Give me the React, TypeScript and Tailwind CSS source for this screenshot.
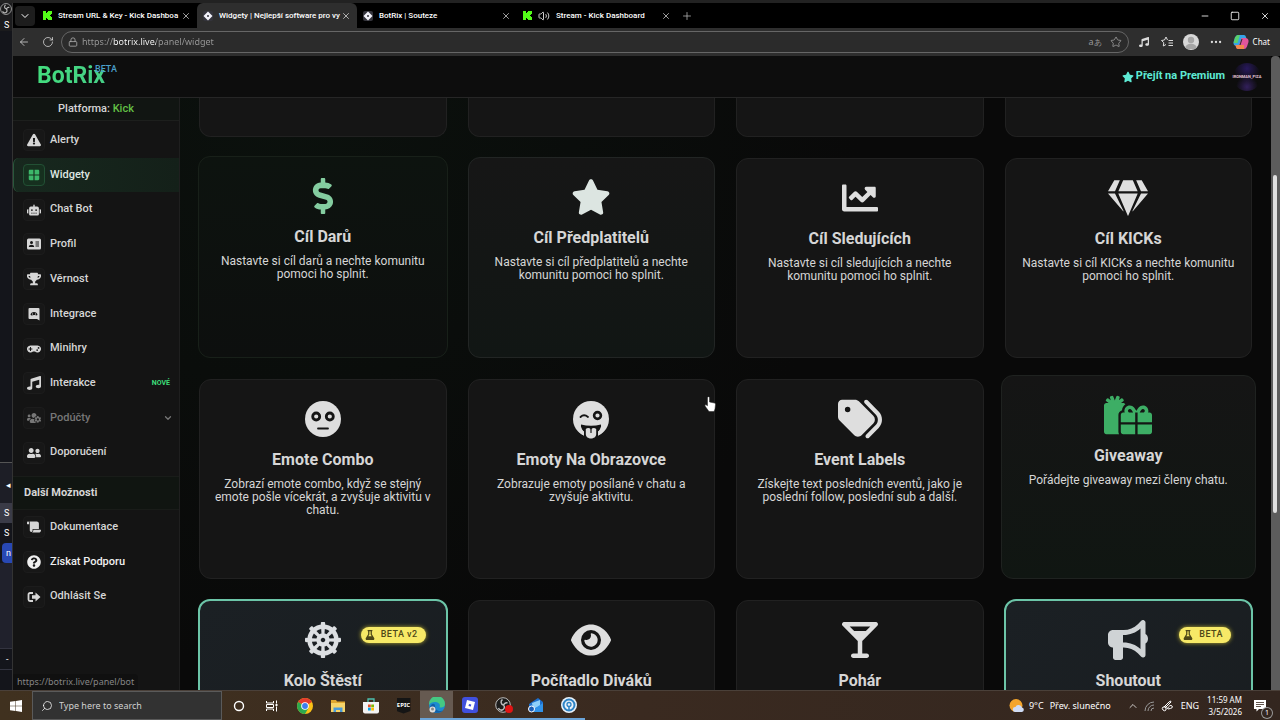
import type { ReactNode } from "react";
import type { IconType } from "react-icons";
import {
  FaChartLine,
  FaDharmachakra,
  FaDollarSign,
  FaExclamationTriangle,
  FaFlask,
  FaGamepad,
  FaGem,
  FaGifts,
  FaMusic,
  FaQuestionCircle,
  FaRobot,
  FaScroll,
  FaTrophy,
  FaUserFriends,
  FaUsersCog,
} from "react-icons/fa";
import { FaBullhorn, FaEye, FaMartiniGlass, FaStar, FaTags } from "react-icons/fa6";
import { MdWindow } from "react-icons/md";
import {
  ArrowLeft,
  ChevronDown,
  ChevronUp,
  Ellipsis,
  Lock,
  Minus,
  Plus,
  RotateCw,
  Search,
  Square,
  Star,
  Volume2,
  X,
} from "lucide-react";

type NavItem = {
  label: string;
  icon: IconType | (() => ReactNode);
  active?: boolean;
  muted?: boolean;
  bright?: boolean;
  tag?: string;
};

const mainNav: NavItem[] = [
  { label: "Alerty", icon: FaExclamationTriangle },
  { label: "Widgety", icon: MdWindow, active: true },
  { label: "Chat Bot", icon: FaRobot },
  { label: "Profil", icon: ProfileIcon },
  { label: "Věrnost", icon: FaTrophy },
  { label: "Integrace", icon: IntegrationIcon },
  { label: "Minihry", icon: FaGamepad },
  { label: "Interakce", icon: FaMusic, tag: "NOVÉ" },
  { label: "Podúčty", icon: FaUsersCog, muted: true },
  { label: "Doporučení", icon: FaUserFriends },
];

const moreNav: NavItem[] = [
  { label: "Dokumentace", icon: FaScroll },
  { label: "Získat Podporu", icon: FaQuestionCircle, bright: true },
  { label: "Odhlásit Se", icon: LogoutIcon },
];

const plain = "border border-[#212121] bg-[#151515]";
const featured = "-m-px border-2 border-[#6cc5a8] bg-linear-to-br from-[#1b2024] to-[#191d20]";

const widgets = [
  {
    title: "Cíl Darů",
    text: "Nastavte si cíl darů a nechte komunitu pomoci ho splnit.",
    icon: <FaDollarSign className="size-9 text-[#84cda0]" />,
    box: "-mx-px -mt-0.5 border border-[#182019] bg-linear-to-b from-[#0d130f] to-[#0d0f0e]",
  },
  {
    title: "Cíl Předplatitelů",
    text: "Nastavte si cíl předplatitelů a nechte komunitu pomoci ho splnit.",
    icon: <FaStar className="size-10 text-[#dce5e1]" />,
    box: "-mt-px border border-[#222524] bg-linear-to-b from-[#161616] to-[#111614]",
  },
  {
    title: "Cíl Sledujících",
    text: "Nastavte si cíl sledujících a nechte komunitu pomoci ho splnit.",
    icon: <FaChartLine className="size-9 text-[#dedede]" />,
    box: plain,
  },
  {
    title: "Cíl KICKs",
    text: "Nastavte si cíl KICKs a nechte komunitu pomoci ho splnit.",
    icon: <FaGem className="size-10 text-[#dedede]" />,
    box: plain,
  },
  {
    title: "Emote Combo",
    text: "Zobrazí emote combo, když se stejný emote pošle vícekrát, a zvyšuje aktivitu v chatu.",
    icon: <StareFace />,
    box: plain,
  },
  {
    title: "Emoty Na Obrazovce",
    text: "Zobrazuje emoty posílané v chatu a zvyšuje aktivitu.",
    icon: <TongueFace />,
    box: plain,
  },
  {
    title: "Event Labels",
    text: "Získejte text posledních eventů, jako je poslední follow, poslední sub a další.",
    icon: <FaTags className="h-11 w-12 text-[#dedede]" />,
    box: plain,
  },
  {
    title: "Giveaway",
    text: "Pořádejte giveaway mezi členy chatu.",
    icon: <FaGifts className="h-10 w-12 text-[#3dae65]" />,
    box: "-mx-1 -mt-1 border border-[#1f2220] bg-linear-to-b from-[#151515] to-[#101612]",
  },
  {
    title: "Kolo Štěstí",
    icon: <FaDharmachakra className="size-9 text-[#dcdfe2]" />,
    box: featured,
    badge: "BETA v2",
  },
  { title: "Počítadlo Diváků", icon: <FaEye className="size-10 text-[#dedede]" />, box: plain },
  { title: "Pohár", icon: <FaMartiniGlass className="size-9 text-[#dedede]" />, box: plain },
  {
    title: "Shoutout",
    icon: <FaBullhorn className="size-10 text-[#cfd3d5]" />,
    box: featured,
    badge: "BETA",
  },
];

export default function App() {
  return (
    <div className="flex h-screen flex-col overflow-hidden bg-black font-['Roboto',sans-serif] text-[#d6d6d6]">
      <div className="h-[3px] shrink-0 bg-[#222]" />
      <div className="flex min-h-0 flex-1">
        <BackgroundWindow />
        <div className="relative flex min-w-0 flex-1 flex-col border-l border-[#333]">
          <TabStrip />
          <Toolbar />
          <div className="flex min-h-0 flex-1">
            <div className="flex min-w-0 flex-1 flex-col bg-[#0a0a0a]">
              <PageHeader />
              <div className="flex min-h-0 flex-1">
                <Sidebar />
                <WidgetGrid />
              </div>
            </div>
            <div className="flex w-[9px] shrink-0 flex-col rounded-t bg-[#5c5c5c] pt-[119px] pr-[3px] pl-0.5">
              <div className="h-[338px] rounded-full bg-[#e0e0e0]" />
            </div>
          </div>
          <div className="absolute bottom-0 left-0 rounded-tr bg-[#101010] px-1 font-['Noto_Sans',sans-serif] text-[9px] leading-4 text-[#858585]">
            https://botrix.live/panel/bot
          </div>
        </div>
      </div>
      <Taskbar />
      <HandCursor />
    </div>
  );
}

function BackgroundWindow() {
  return (
    <div className="flex w-3 shrink-0 flex-col overflow-hidden bg-[#14151b] text-[9px] leading-3 text-white">
      <div className="flex h-7 shrink-0 flex-col justify-between bg-[#1b1b1d]">
        <ObsIcon className="size-3" />
        <span className="pl-1">S</span>
      </div>
      <div className="mt-[431px] border-t border-[#555] bg-[#1d1e26] py-4 pl-1.5">◂</div>
      <div className="-mt-1 bg-[#3a3b47] py-1 pl-1">S</div>
      <div className="py-1 pl-1">S</div>
      <div className="ml-0.5 rounded-l bg-[#2848b4] py-1 pl-1">n</div>
      <div className="flex-1 bg-[#20212c]" />
      <div className="mb-5 border-y border-[#333440] py-1 pl-1.5">-</div>
    </div>
  );
}

function TabStrip() {
  return (
    <div className="flex h-[25px] shrink-0 items-center bg-black text-[8px] font-medium text-white">
      <button className="mx-0.5 flex h-5 w-5 items-center justify-center rounded bg-[#1d1d1d]" aria-label="Tab actions">
        <ChevronDown className="size-3" />
      </button>
      <Tab title="Stream URL & Key - Kick Dashboa" icon={<KickIcon />} />
      <Tab title="Widgety | Nejlepší software pro vy" icon={<BotrixIcon />} active />
      <Tab title="BotRix | Souteze" icon={<BotrixIcon />} />
      <Tab title="Stream - Kick Dashboard" icon={<KickIcon />} sound />
      <button className="p-1 text-[#bbb]" aria-label="New tab">
        <Plus className="size-3" strokeWidth={1.5} />
      </button>
      <div className="ml-auto flex items-center gap-5 pr-2.5">
        <button aria-label="Minimize">
          <Minus className="size-2.5" />
        </button>
        <button aria-label="Maximize">
          <Square className="size-2.5" />
        </button>
        <button aria-label="Close">
          <X className="size-2.5" />
        </button>
      </div>
    </div>
  );
}

function Tab({ title, icon, active, sound }: { title: string; icon: ReactNode; active?: boolean; sound?: boolean }) {
  return (
    <div
      className={`flex h-full w-40 items-center gap-1.5 px-1.5 ${
        active ? "rounded-t-md bg-[#2e2e2e]" : "bg-black"
      }`}
    >
      {icon}
      {sound && <Volume2 className="size-3 shrink-0 text-[#ccc]" />}
      <span className="min-w-0 flex-1 whitespace-nowrap">{title}</span>
      <button aria-label="Close tab">
        <X className="size-2.5" strokeWidth={1.5} />
      </button>
    </div>
  );
}

function Toolbar() {
  return (
    <div className="flex h-7 shrink-0 items-center bg-[#2e2e2e] font-['Noto_Sans',sans-serif] text-[#dcdcdc]">
      <button className="ml-1 p-px" aria-label="Back">
        <ArrowLeft className="size-3" strokeWidth={1.5} />
      </button>
      <button className="ml-2.5 p-px" aria-label="Reload">
        <RotateCw className="size-3" strokeWidth={1.5} />
      </button>
      <div className="ml-1.5 flex h-[22px] flex-1 items-center gap-1 rounded-full border border-[#666] bg-[#2b2b2b] px-1.5">
        <Lock className="size-2.5 text-[#aaa]" />
        {/* host part is brighter than the rest of the address */}
        <input
          aria-label="Address"
          defaultValue="https://botrix.live/panel/widget"
          className="flex-1 bg-[linear-gradient(to_right,#9a9a9a_31px,#fff_31px,#fff_74px,#9a9a9a_74px)] bg-clip-text text-[9px] text-transparent outline-none"
        />
        <span className="text-[9px] text-[#999]">a</span>
        <span className="-ml-1 pr-1 text-[8px] text-[#999]">あ</span>
        <Star className="size-3 text-[#aaa]" strokeWidth={1.5} />
      </div>
      <div className="flex items-center gap-2.5 pr-2.5 pl-2.5">
        <FaMusic className="mr-0.5 size-2.5" />
        <FavoritesIcon />
        <span className="flex size-4 items-end justify-center overflow-hidden rounded-full bg-[#d8d8d8]">
          <svg viewBox="0 0 16 16" className="size-4 fill-[#a5a5a5]" aria-hidden="true">
            <circle cx="8" cy="6" r="3.2" />
            <path d="M2 15c0-7 12-7 12 0z" />
          </svg>
        </span>
        <Ellipsis className="size-3.5" />
        <button className="flex items-center gap-1 text-[8px] text-white">
          <CopilotIcon />
          Chat
        </button>
      </div>
    </div>
  );
}

function PageHeader() {
  return (
    <header className="flex h-[42px] shrink-0 items-center justify-between border-b border-[#262626] bg-[#0d0d0d] pr-2.5 pl-6">
      <a href="/" className="flex items-center">
        <span className="bg-linear-to-r from-[#43dd7e] to-[#46cf86] bg-clip-text text-[23px] font-bold text-transparent">
          BotRix
        </span>
        <span className="-ml-2.5 pb-4 text-[9px] leading-3 font-medium text-[#4a9fca]">BETA</span>
      </a>
      <div className="flex items-center gap-2">
        <a href="/premium" className="flex items-center gap-0.5 text-[11px] font-bold text-[#5eead4]">
          <FaStar className="size-3" />
          Přejít na Premium
        </a>
        <div className="flex size-7 items-center justify-center rounded-full bg-[radial-gradient(circle_at_50%_20%,#28195c,transparent_50%),radial-gradient(circle_at_50%_85%,#33205c,transparent_40%)] text-[4px] font-bold text-[#e5c6d8]">
          IRONMAN_PIZA
        </div>
      </div>
    </header>
  );
}

function Sidebar() {
  return (
    <aside className="w-[167px] shrink-0 border-r border-[#1f1f1f] bg-[#141414] text-[11px] font-medium">
      <p className="h-[23px] border-b border-[#1d1f1d] bg-[#111512] text-center leading-[22px]">
        Platforma: <span className="text-[#62bf45]">Kick</span>
      </p>
      <nav>
        <ul className="mt-0.5 grid h-[347px] auto-rows-fr">
          {mainNav.map((item) => (
            <NavRow key={item.label} item={item} />
          ))}
        </ul>
        <h2 className="mt-1.5 border-y border-[#191c19] bg-[#101511] pl-[11px] leading-8 font-bold">Další Možnosti</h2>
        <ul className="grid h-[104px] auto-rows-fr">
          {moreNav.map((item) => (
            <NavRow key={item.label} item={item} />
          ))}
        </ul>
      </nav>
    </aside>
  );
}

function NavRow({ item }: { item: NavItem }) {
  const Icon = item.icon;
  return (
    <li>
      <a
        href="#"
        className={`flex h-full items-center gap-[5px] border-l pr-1.5 pl-[9px] ${
          item.active
            ? "rounded-l-md border-[#29583c] bg-linear-to-r from-[#17281e] to-[#142019] text-[#dfe6e1]"
            : "border-transparent"
        } ${item.muted ? "text-[#777]" : ""} ${item.bright ? "text-[#f0f0f0]" : ""}`}
      >
        <span
          className={`flex size-[22px] items-center justify-center rounded border text-[14px] ${
            item.active ? "border-[#225034] bg-[#16301f] text-[#3db76a]" : "border-[#1c1c1c] bg-[#171717]"
          }`}
        >
          <Icon />
        </span>
        {item.label}
        {item.tag && <span className="ml-auto pr-[3px] text-[7px] font-bold text-[#3ddc78]">{item.tag}</span>}
        {item.muted && <ChevronDown className="ml-auto size-2.5" strokeWidth={3} />}
      </a>
    </li>
  );
}

function WidgetGrid() {
  return (
    <main className="min-w-0 flex-1 overflow-hidden bg-[radial-gradient(circle_at_10%_0%,#0b110d,#090909_50%)] px-[19px]">
      <div className="grid grid-cols-4 grid-rows-[39px_200px_200px_200px] gap-[21px]">
        {[0, 1, 2, 3].map((n) => (
          <div key={n} className="rounded-b-xl border border-t-0 border-[#212121] bg-[#151515]" />
        ))}
        {widgets.map((widget) => (
          <a
            key={widget.title}
            href="#"
            className={`relative flex flex-col items-center rounded-xl px-3 pt-[19px] text-center ${widget.box}`}
          >
            <span className="flex h-10 items-center">{widget.icon}</span>
            <h3 className="mt-[9px] text-[16px] leading-6 font-bold">{widget.title}</h3>
            {widget.text && <p className="mt-1.5 text-[12px] leading-[13px]">{widget.text}</p>}
            {widget.badge && (
              <span className="absolute top-[26px] right-5 flex h-4 items-center gap-1.5 rounded-full bg-[#f7e967] pr-2 pl-1 text-[9px] font-medium tracking-wider text-[#4d4718] shadow-[0_0_4px_#b9ad32]">
                <FaFlask className="size-2.5" />
                {widget.badge}
              </span>
            )}
          </a>
        ))}
      </div>
    </main>
  );
}

function Taskbar() {
  const open = "border-b-2 border-[#6ba4d8]";
  return (
    <footer className="flex h-[30px] shrink-0 items-stretch border-t border-[#4a4039] bg-linear-to-r from-[#40311f] via-[#3a2a20] to-[#33261f] font-['Noto_Sans',sans-serif] text-white">
      <button className="flex w-8 items-center justify-center" aria-label="Start">
        <svg viewBox="0 0 12 12" className="size-3 fill-white" aria-hidden="true">
          <path d="M0 1.7 5.5 1v4.7H0zM6 .9 12 0v5.7H6zM0 6.2h5.5V11L0 10.2zM6 6.2h6V12l-6-.9z" />
        </svg>
      </button>
      <label className="flex w-[190px] items-center gap-1.5 border border-[#5a5a5a] bg-[#323232] px-2">
        <Search className="size-3 -scale-x-100" strokeWidth={1.5} />
        <input
          aria-label="Search"
          placeholder="Type here to search"
          className="min-w-0 flex-1 bg-transparent text-[9px] outline-none placeholder:text-[#d0d0d0]"
        />
      </label>
      <TaskButton label="Cortana">
        <svg viewBox="0 0 14 14" className="size-3.5" aria-hidden="true">
          <circle cx="7" cy="7" r="4.5" fill="none" stroke="white" strokeWidth="1.4" />
        </svg>
      </TaskButton>
      <TaskButton label="Task view">
        <svg viewBox="0 0 14 14" className="size-3.5" fill="none" stroke="white" aria-hidden="true">
          <path d="M1.5 2v2h7V2M1.5 12v-2h7v2M1.5 5.500h7v3h-7zM11.500 1.500v3M11.500 7.500v5" />
          <path d="M10.500 5h2v2h-2z" fill="white" stroke="none" />
        </svg>
      </TaskButton>
      <TaskButton label="Chrome">
        <svg viewBox="0 0 16 16" className="size-4" aria-hidden="true">
          <circle cx="8" cy="8" r="8" fill="#fbc116" />
          <path d="M8 8 1.100 4A8 8 0 0 1 14.900 4z" fill="#e33b2e" />
          <path d="M8 8 1.100 4A8 8 0 0 0 8 16l3.500-6z" fill="#2da94f" />
          <circle cx="8" cy="8" r="3.800" fill="white" />
          <circle cx="8" cy="8" r="2.900" fill="#3b7ded" />
        </svg>
      </TaskButton>
      <TaskButton label="File Explorer">
        <svg viewBox="0 0 16 16" className="size-4" aria-hidden="true">
          <path d="M1 2h5l1 1.500h8V6H1z" fill="#e0a830" />
          <path d="M1 5h14v9H1z" fill="#f6d469" />
          <path d="M3.500 14V9.500h9V14h-2.500v-2H6v2z" fill="#4a9bd8" />
        </svg>
      </TaskButton>
      <TaskButton label="Store">
        <svg viewBox="0 0 16 16" className="size-4" aria-hidden="true">
          <path d="M5 4V1h6v3" fill="none" stroke="#4cc0b0" strokeWidth="1.300" />
          <path d="M0 4h16v9.500a2 2 0 0 1-2 2H2a2 2 0 0 1-2-2z" fill="#f3f3f3" />
          <path d="M5 6.500h2.800v2.800H5z" fill="#e8502a" />
          <path d="M8.200 6.500H11v2.800H8.200z" fill="#7fba00" />
          <path d="M5 9.700h2.800v2.800H5z" fill="#00a4ef" />
          <path d="M8.200 9.700H11v2.800H8.200z" fill="#ffb900" />
        </svg>
      </TaskButton>
      <TaskButton label="Epic Games">
        <span className="flex h-4 w-3.5 items-center justify-center bg-[#151515] text-[6px] font-bold [clip-path:polygon(0_0,100%_0,100%_85%,50%_100%,0_85%)]">
          EPIC
        </span>
      </TaskButton>
      <TaskButton label="Edge" className="border-b-2 border-[#6ba4d8] bg-[#665a51]">
        <svg viewBox="0 0 16 16" className="size-4" aria-hidden="true">
          <circle cx="8" cy="8" r="8" fill="#1b8bd0" />
          <path d="M0 7a8 8 0 0 1 16 0c0 3-3 4-5.500 3.300C12 7 9 5 6 5S1 6 0 8z" fill="#45c983" />
          <path d="M6 9c0 4 4 6 8 4.500A8 8 0 0 1 1 11C1 7 6 5 6 9z" fill="#115fa8" />
          <circle cx="3.500" cy="12.500" r="3" fill="#ddd" />
          <circle cx="3.500" cy="12" r="1.500" fill="#888" />
        </svg>
      </TaskButton>
      <TaskButton label="Roblox" className={open}>
        <svg viewBox="0 0 16 16" className="size-4" aria-hidden="true">
          <rect width="16" height="16" rx="3" fill="#4050dd" />
          <path d="m5 3 8 2-2 8-8-2zm2 4-.5 2 2.300.600.500-2z" fill="white" fillRule="evenodd" />
        </svg>
      </TaskButton>
      <TaskButton label="OBS" className={open}>
        <span className="relative">
          <ObsIcon className="size-4" />
          <span className="absolute -right-0.5 bottom-0 size-2 rounded-full bg-[#e11414]" />
        </span>
      </TaskButton>
      <TaskButton label="Mail" className={open}>
        <svg viewBox="0 0 16 16" className="size-4" aria-hidden="true">
          <path d="m1 7 9-6 5 4v9H1z" fill="#1d6fcc" />
          <path d="m4 6 8-3v6l-7 3z" fill="#8fd0fa" />
          <path d="m6 12 9-6v9H3z" fill="#3093ea" />
          <circle cx="3.500" cy="12" r="3" fill="#1b5fb8" stroke="white" />
        </svg>
      </TaskButton>
      <TaskButton label="Signal" className={open}>
        <svg viewBox="0 0 16 16" className="size-4" fill="none" aria-hidden="true">
          <circle cx="8" cy="8" r="8" fill="#e9f2fa" />
          <circle cx="8" cy="8" r="5.500" stroke="#2d83c5" strokeWidth="2" />
          <circle cx="8" cy="7.500" r="2" stroke="#2d83c5" strokeWidth="1.300" />
          <path d="M8 9v4" stroke="#2d83c5" strokeWidth="1.500" />
        </svg>
      </TaskButton>

      <div className="ml-auto flex items-center pr-3.5 text-[9px]">
        <svg viewBox="0 0 16 16" className="size-4" aria-hidden="true">
          <circle cx="7" cy="7.500" r="6.500" fill="#f4a52c" />
          <path d="M6 14a2.500 2.500 0 0 1 .500-5 3.500 3.500 0 0 1 6.500.500A2.300 2.300 0 0 1 13 14z" fill="#cfdcf5" />
        </svg>
        <span className="ml-1">9°C</span>
        <span className="ml-1.5">Přev. slunečno</span>
        <ChevronUp className="ml-4 size-3" strokeWidth={1.5} />
        <svg viewBox="0 0 12 12" className="ml-1 size-3" fill="none" stroke="#999" aria-hidden="true">
          <path d="M2 11A9 9 0 0 1 11 2M5 11a6 6 0 0 1 6-6M8 11a3 3 0 0 1 3-3" />
        </svg>
        <svg viewBox="0 0 12 12" className="ml-1.5 size-3" fill="none" stroke="white" aria-hidden="true">
          <path d="M3 7 8 2q2-2 2 0L4 8M2 7h3v3a2 2 0 0 1-3-3M6 9q3-5 5-3t-4 3" />
        </svg>
        <span className="ml-2">ENG</span>
        <time className="ml-2 text-right text-[8px] leading-3">
          11:59 AM
          <br />
          3/5/2026
        </time>
        <button className="relative ml-3" aria-label="Notifications">
          <svg viewBox="0 0 12 12" className="size-3" aria-hidden="true">
            <path d="M0 0h12v9H5l-2.500 2.500V9H0z" fill="white" />
            <path d="M2 2.500h8M2 4.500h8M2 6.500h5" stroke="#3a2a20" strokeWidth=".8" />
          </svg>
          <span className="absolute -right-1.5 -bottom-1.5 size-2.5 rounded-full bg-[#33261f] text-[7px] leading-[10px] ring-1 ring-[#999]">
            1
          </span>
        </button>
      </div>
    </footer>
  );
}

function TaskButton({ label, className = "", children }: { label: string; className?: string; children: ReactNode }) {
  return (
    <button aria-label={label} className={`flex w-[33px] items-center justify-center ${className}`}>
      {children}
    </button>
  );
}

function StareFace() {
  return (
    <svg viewBox="0 0 36 36" className="size-9" aria-hidden="true">
      <circle cx="18" cy="18" r="18" fill="#dedede" />
      <g fill="#dedede" stroke="#151515" strokeWidth="2.8">
        <circle cx="11.200" cy="15.500" r="3.500" />
        <circle cx="24.800" cy="15.500" r="3.500" />
      </g>
      <path d="M13 27.500h10" stroke="#151515" strokeWidth="1.800" strokeLinecap="round" />
    </svg>
  );
}

function TongueFace() {
  return (
    <svg viewBox="0 0 36 36" className="size-9 overflow-visible" aria-hidden="true">
      <circle cx="18" cy="18" r="18" fill="#dedede" />
      <circle cx="24.500" cy="14.500" r="3.400" fill="none" stroke="#151515" strokeWidth="2.600" />
      <path d="M7.500 16q3.500-3.500 7.500 0" fill="none" stroke="#151515" strokeWidth="1.800" strokeLinecap="round" />
      <path
        d="M8 23.500q10 2.500 20 0c.5 3-.8 5.500-3 7.300V36H11v-5.200C8.800 29 7.500 26.500 8 23.500z"
        fill="#151515"
      />
      <path d="M8 23.500c-.5 3 .8 5.500 3 7.300V34.600A18 18 0 0 1 6 31zM28 23.500c.5 3-.8 5.500-3 7.300v3.800a18 18 0 0 0 5-3.600z" fill="#dedede" />
      <path d="M12.800 28q2.700-2 5.200.5 2.500-2.500 5.200-.5v5c0 6-10.400 6-10.400 0z" fill="#dedede" />
      <path d="M18 28v3.500" stroke="#151515" strokeWidth="1.200" strokeLinecap="round" />
    </svg>
  );
}

function ProfileIcon() {
  return (
    <svg viewBox="0 0 14 14" className="size-3.5" aria-hidden="true">
      <rect y="1.500" width="14" height="11" rx="1.500" fill="currentColor" />
      <g fill="#171717">
        <circle cx="4.500" cy="5.500" r="1.500" />
        <path d="M1.800 10c0-3 5.400-3 5.400 0zM8.500 4.500H12v1H8.500zM8.500 6.500H12v1H8.500zM8.500 8.500H12v1H8.500z" />
      </g>
    </svg>
  );
}

function IntegrationIcon() {
  return (
    <svg viewBox="0 0 14 14" className="size-3.5" aria-hidden="true">
      <path d="M2.500 1h9a1 1 0 0 1 1 1v11.500L10 12H2.500a1 1 0 0 1-1-1V2a1 1 0 0 1 1-1z" fill="currentColor" />
      <path d="M3.500 8c0-4 7-4 7 0-1.500 1-2 0-3.500 0s-2 1-3.500 0z" fill="#171717" />
      <path d="M5 7h1M8 7h1" stroke="currentColor" />
    </svg>
  );
}

function LogoutIcon() {
  return (
    <svg viewBox="0 0 14 14" className="size-3.5" aria-hidden="true">
      <path d="M6 3H3a1.500 1.500 0 0 0-1.500 1.500v5A1.500 1.500 0 0 0 3 11h3" fill="none" stroke="currentColor" strokeWidth="1.800" />
      <path d="M5 5.300h3.500V2.500L13.500 7l-5 4.500V8.700H5z" fill="currentColor" />
    </svg>
  );
}

function KickIcon() {
  return (
    <svg viewBox="0 0 9 9" className="size-[9px] shrink-0 fill-[#53fc18]" aria-hidden="true">
      <path d="M0 0h3v2h1V1h1V0h4v3H8v1H7v1h1v1h1v3H5V8H4V7H3v2H0z" />
    </svg>
  );
}

function BotrixIcon() {
  return (
    <svg viewBox="0 0 10 10" className="size-2.5 shrink-0" aria-hidden="true">
      <rect width="10" height="10" rx="2" fill="#34343c" />
      <path d="m5 .5 4.500 4.500L5 9.500.5 5z" fill="#f2f2fa" />
      <path d="M5 4v2M4 5h2" stroke="#34343c" />
    </svg>
  );
}

function FavoritesIcon() {
  return (
    <svg viewBox="0 0 12 12" className="size-3" fill="none" stroke="currentColor" aria-hidden="true">
      <path d="M6.500 4 5 1 3.500 4 .5 4.500l2.300 2.200-.5 3.300L5 8.500M7.500 4.500H12M7.500 7H12M7.500 9.500H12" />
    </svg>
  );
}

function CopilotIcon() {
  return (
    <svg viewBox="0 0 16 16" className="size-4" aria-hidden="true">
      <path d="M5 1h6q1.500 0 2 2l.5 2H10L7.500 12H4q-4 0-3.500-4L2 3.500Q3 1 5 1z" fill="#36a3e8" />
      <path d="M2 3.500Q3 1 5 1h2L4.500 9H.7z" fill="#5ad06c" />
      <path d="M11 15H5q-1.500 0-2-2l-.5-2H6L8.500 4H12q4 0 3.500 4L14 12.500Q13 15 11 15z" fill="#e2559c" />
      <path d="M11 15H5q-1.500 0-2-2l-.5-2H11z" fill="#f2894c" />
      <path d="m8.500 5-2 6h1l2-6z" fill="#2c2c2c" />
    </svg>
  );
}

function ObsIcon({ className }: { className: string }) {
  return (
    <svg viewBox="0 0 16 16" className={className} aria-hidden="true">
      <circle cx="8" cy="8" r="7.300" fill="#1c1c1c" stroke="#bbb" />
      <path d="M7.500 2.500a3 3 0 0 0 1 5.500M12.500 6a3 3 0 0 0-4 2.500M8.500 8a3 3 0 1 1-5 3" fill="none" stroke="#bbb" strokeWidth="1.500" />
    </svg>
  );
}

function HandCursor() {
  return (
    <svg viewBox="0 0 12 16" className="pointer-events-none absolute top-[396px] left-[704px] h-4 w-3" aria-hidden="true">
      <path
        d="M3.500 1.200q1.200-1 2 0V6l5 1q1 .3 1 1.500L11 13l-1 2.500H5L1 10q-.5-1.500 1-1.200l1.500 1z"
        fill="white"
        stroke="#222"
        strokeWidth=".5"
      />
    </svg>
  );
}
